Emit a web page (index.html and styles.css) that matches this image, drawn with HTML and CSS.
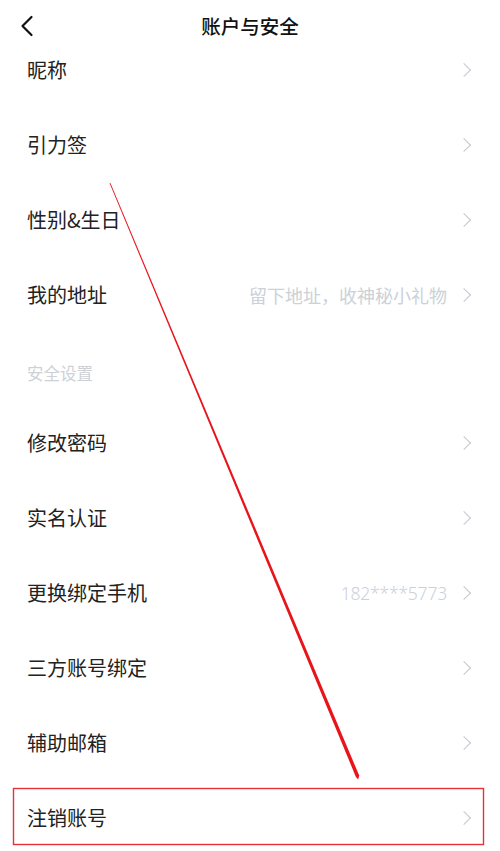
FILE: index.html
```html
<!DOCTYPE html>
<html lang="zh-CN">
<head>
<meta charset="utf-8">
<title>账户与安全</title>
<link rel="stylesheet" href="styles.css">
</head>
<body>
<div class="page">
  <header class="nav">
    <svg class="back" width="14" height="22" viewBox="0 0 14 22"><path d="M11.5 2 L2.5 11 L11.5 20" fill="none" stroke="#111" stroke-width="2.2" stroke-linecap="round" stroke-linejoin="round"/></svg>
    <h1 class="title">账户与安全</h1>
  </header>
  <ul class="list">
    <li class="row"><span class="label">昵称</span><span class="chev"></span></li>
    <li class="row"><span class="label">引力签</span><span class="chev"></span></li>
    <li class="row"><span class="label">性别&amp;生日</span><span class="chev"></span></li>
    <li class="row"><span class="label">我的地址</span><span class="hint">留下地址，收神秘小礼物</span><span class="chev"></span></li>
  </ul>
  <div class="section">安全设置</div>
  <ul class="list">
    <li class="row"><span class="label">修改密码</span><span class="chev"></span></li>
    <li class="row"><span class="label">实名认证</span><span class="chev"></span></li>
    <li class="row"><span class="label">更换绑定手机</span><span class="hint num">182****5773</span><span class="chev"></span></li>
    <li class="row"><span class="label">三方账号绑定</span><span class="chev"></span></li>
    <li class="row"><span class="label">辅助邮箱</span><span class="chev"></span></li>
    <li class="row"><span class="label">注销账号</span><span class="chev"></span></li>
  </ul>
  <svg class="annot" width="500" height="851" viewBox="0 0 500 851">
    <rect x="13.5" y="788.5" width="470" height="56" fill="none" stroke="#e4343a" stroke-width="1.4"/>
    <polygon points="109.6,183.2 110.3,182.8 359.2,775.6 358.2,779.5 355.9,776.9" fill="#e8141b"/>
  </svg>
</div>
</body>
</html>
```
FILE: styles.css
```css
* { box-sizing: border-box; margin: 0; padding: 0; }
html, body { background: #fff; }
body {
  font-family: "Noto Sans CJK SC", "Noto Sans", sans-serif;
  color: #222;
  overflow: hidden;
}
.page {
  position: relative;
  width: 500px;
  height: 851px;
  overflow: hidden;
}
.nav {
  position: relative;
  height: 32px;
  display: flex;
  justify-content: center;
  align-items: flex-start;
  padding-top: 15px;
}
.back {
  position: absolute;
  left: 20px;
  top: 15px;
}
.title {
  font-size: 19.5px;
  line-height: 22px;
  font-weight: 500;
  color: #111;
}
.list { list-style: none; }
.row {
  position: relative;
  height: 75px;
  display: flex;
  align-items: center;
  padding: 0 28px 0 27px;
}
.label {
  font-size: 20px;
  line-height: 24px;
  color: #222;
  flex: 1;
}
.hint {
  font-size: 18px;
  color: #cbd1d8;
  margin-right: 15px;
}
.hint.num {
  font-family: "Noto Sans", sans-serif;
  font-weight: 300;
  font-size: 17.5px;
  letter-spacing: -0.2px;
}
.chev {
  width: 10px;
  height: 16px;
  position: relative;
}
.chev::before {
  content: "";
  position: absolute;
  left: -3px;
  top: 3px;
  width: 9px;
  height: 9px;
  border-top: 1.6px solid #c3c7ce;
  border-right: 1.6px solid #c3c7ce;
  transform: rotate(45deg);
}
.section {
  height: 73px;
  padding: 30px 0 0 27px;
  font-size: 16.5px;
  line-height: 22px;
  color: #cdd1d6;
}
.annot {
  position: absolute;
  left: 0;
  top: 0;
  pointer-events: none;
}
```
